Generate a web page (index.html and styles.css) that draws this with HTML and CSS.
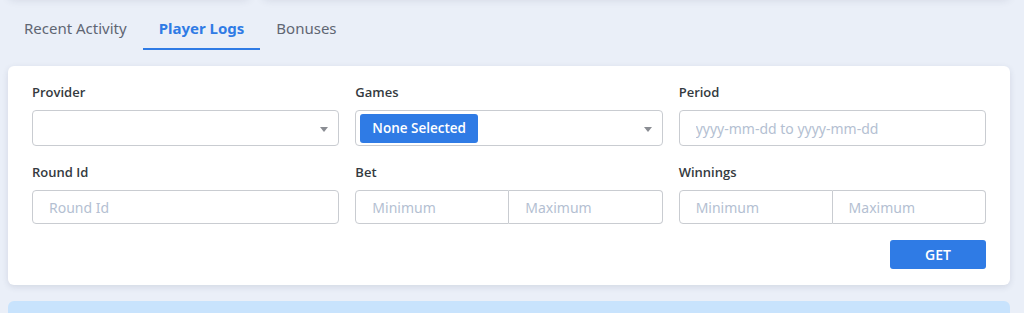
FILE: index.html
```html
<!DOCTYPE html>
<html lang="en">
<head>
  <meta charset="UTF-8"/>
  <title>Player Logs</title>
  <link rel="stylesheet" href="styles.css">
</head>
<body>
  <!-- cards above, scrolled out of view -->
  <div class="top-cards">
    <div class="top-card small"></div>
    <div class="top-card wide"></div>
  </div>

  <!-- ========== TABS ========== -->
  <ul class="tabs">
    <li><a href="#">Recent Activity</a></li>
    <li><a href="#" class="active">Player Logs</a></li>
    <li><a href="#">Bonuses</a></li>
  </ul>

  <!-- ========== FILTERS ========== -->
  <form class="card filters" onsubmit="return false">
    <div class="field">
      <label>Provider</label>
      <div class="select"><span class="caret"></span></div>
    </div>
    <div class="field">
      <label>Games</label>
      <div class="select"><span class="chip">None Selected</span><span class="caret"></span></div>
    </div>
    <div class="field">
      <label>Period</label>
      <input class="tall" type="text" placeholder="yyyy-mm-dd to yyyy-mm-dd">
    </div>

    <div class="field">
      <label>Round Id</label>
      <input type="text" placeholder="Round Id">
    </div>
    <div class="field">
      <label>Bet</label>
      <div class="range">
        <input type="text" placeholder="Minimum">
        <input type="text" placeholder="Maximum">
      </div>
    </div>
    <div class="field">
      <label>Winnings</label>
      <div class="range">
        <input type="text" placeholder="Minimum">
        <input type="text" placeholder="Maximum">
      </div>
    </div>

    <div class="actions"><button class="btn-get">GET</button></div>
  </form>

  <div class="notice"></div>
</body>
</html>
```

FILE: styles.css
```css
*{margin:0;padding:0;box-sizing:border-box}
body{font-family:'Noto Sans','Open Sans',sans-serif;background:#eaeff8;color:#343a40;padding:0 14px 0 8px;overflow:hidden}

.top-cards{display:flex;gap:12px;height:40px;margin-top:-42px}
.top-card{background:#fff;border-radius:6px;box-shadow:0 2px 8px rgba(40,50,80,.12)}
.top-card.small{width:242px}
.top-card.wide{flex:1}

.tabs{list-style:none;display:flex;margin-top:12px;height:40px}
.tabs a{display:block;padding:0 16px;height:40px;line-height:36px;font-size:15px;color:#5f6673;text-decoration:none;border-bottom:2px solid transparent}
.tabs a.active{color:#2f7be5;font-weight:700;border-bottom-color:#2f7be5}

.card{background:#fff;border-radius:6px;box-shadow:0 2px 6px rgba(40,50,80,.12)}
.filters{margin-top:16px;padding:16px 24px;display:grid;grid-template-columns:repeat(3,1fr);gap:16px}
.field label{display:block;font-family:'Open Sans',sans-serif;font-size:13px;font-weight:600;line-height:20px;margin-bottom:8px;color:#343a40}

.select{position:relative;height:36px;border:1px solid #c9ccd1;border-radius:4px;padding:3px 4px;display:flex;align-items:center}
.caret{position:absolute;right:10px;top:16px;width:0;height:0;border-left:4px solid transparent;border-right:4px solid transparent;border-top:5px solid #8a8d93}
.chip{background:#2f7be5;color:#fff;font-family:'Open Sans',sans-serif;font-size:13.5px;font-weight:600;border-radius:3px;height:29px;line-height:29px;padding:0 12px}

input{width:100%;height:34px;border:1px solid #c9ccd1;border-radius:4px;padding:0 16px;font:14px 'Noto Sans','Open Sans',sans-serif;color:#343a40;outline:none}
input.tall{height:36px}
input::placeholder{color:#b4bfd2}

.range{display:flex}
.range input:first-child{border-radius:4px 0 0 4px}
.range input:last-child{border-radius:0 4px 4px 0;border-left:none}

.actions{grid-column:1/-1;display:flex;justify-content:flex-end}
.btn-get{width:96px;height:29px;border:none;border-radius:3px;background:#2f7be5;color:#fff;font:600 14px 'Open Sans',sans-serif;cursor:pointer}

.notice{margin-top:16px;height:12px;background:#c8e3fd;border-radius:6px 6px 0 0}
```
